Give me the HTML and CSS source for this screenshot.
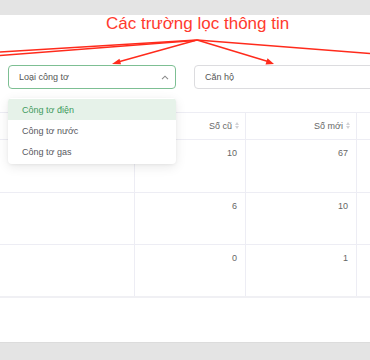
FILE: index.html
```html
<!DOCTYPE html>
<html lang="vi">
<head>
<meta charset="utf-8">
<link rel="stylesheet" href="styles.css">
</head>
<body>
<div class="topbar"></div>
<div class="main">
  <div class="title">Các trường lọc thông tin</div>
  <div class="filters">
    <div class="select active">
      <span>Loại công tơ</span>
      <svg class="chev" width="8" height="5" viewBox="0 0 8 5"><polyline points="1,4.2 4,1.2 7,4.2" fill="none" stroke="#8a8a8a" stroke-width="1.1"/></svg>
    </div>
    <div class="select wide"><span>Căn hộ</span></div>
  </div>
  <div class="table">
    <div class="row head">
      <div class="cell"></div>
      <div class="cell">Số cũ <i class="sort"><b class="up"></b><b class="down"></b></i></div>
      <div class="cell">Số mới <i class="sort"><b class="up"></b><b class="down"></b></i></div>
      <div class="cell"></div>
    </div>
    <div class="row">
      <div class="cell"></div><div class="cell">10</div><div class="cell">67</div><div class="cell"></div>
    </div>
    <div class="row r2">
      <div class="cell"></div><div class="cell">6</div><div class="cell">10</div><div class="cell"></div>
    </div>
    <div class="row last">
      <div class="cell"></div><div class="cell">0</div><div class="cell">1</div><div class="cell"></div>
    </div>
  </div>
  <ul class="dropdown">
    <li class="on">Công tơ điện</li>
    <li>Công tơ nước</li>
    <li>Công tơ gas</li>
  </ul>
  <svg class="arrows" width="370" height="80" viewBox="0 0 370 80">
    <g stroke="#ff2b1c" stroke-width="1.4" fill="none">
      <line x1="197" y1="40" x2="0" y2="52"/>
      <line x1="195" y1="40.5" x2="0" y2="55.5"/>
      <line x1="197" y1="40" x2="118" y2="62"/>
      <line x1="197" y1="40" x2="268" y2="61.5"/>
      <line x1="197" y1="40" x2="370" y2="53.5"/>
    </g>
    <g fill="#ff2b1c">
      <polygon points="112,64 119.5,58.8 121,64.2"/>
      <polygon points="274,64 265.5,64.5 267.5,58.3"/>
    </g>
  </svg>
</div>
<div class="bottombar"></div>
</body>
</html>
```
FILE: styles.css
```css
html, body {
  margin: 0;
  padding: 0;
}
body {
  width: 370px;
  height: 360px;
  overflow: hidden;
  background: #fff;
  font-family: "Liberation Sans", Arial, sans-serif;
}
.topbar {
  height: 15px;
  background: #e4e4e4;
}
.bottombar {
  height: 17px;
  background: #e4e4e4;
  border-top: 1px solid #dcdcdc;
}
.main {
  position: relative;
  height: 327px;
  background: #fff;
  overflow: hidden;
}
.title {
  font-size: 17px;
  line-height: 17px;
  color: #ff3a2e;
  padding-left: 106px;
  white-space: nowrap;
}
.filters {
  display: flex;
  gap: 18px;
  padding: 33px 0 0 8px;
  width: 600px;
}
.select {
  box-sizing: border-box;
  width: 168px;
  height: 24px;
  border: 1px solid #dcdcdf;
  border-radius: 4px;
  display: flex;
  align-items: center;
  justify-content: space-between;
  padding: 0 6px 0 10px;
  font-size: 9px;
  color: #555;
}
.select.wide {
  width: 240px;
}
.select.active {
  border-color: #7dbf93;
}
.chev {
  display: block;
}
.table {
  margin-top: 23px;
  width: 480px;
  border-top: 1px solid #ededf4;
}
.row {
  display: grid;
  grid-template-columns: 135px 111px 111px 111px;
  height: 53px;
  border-bottom: 1px solid #ededf4;
  box-sizing: border-box;
}
.row.head {
  height: 27px;
}
.row.r2 {
  height: 52px;
}
.row.last {
  border-bottom: 2px solid #f0f0f4;
}
.cell {
  border-right: 1px solid #ededf4;
  font-size: 9px;
  color: #666;
  text-align: right;
  padding: 8px 8px 0 0;
  line-height: 10px;
}
.head .cell {
  padding: 8px 6px 0 0;
  display: flex;
  justify-content: flex-end;
  align-items: flex-start;
  gap: 3px;
  color: #666;
}
.sort {
  display: flex;
  flex-direction: column;
  gap: 1px;
  padding-top: 1px;
}
.sort b {
  width: 0;
  height: 0;
  border-left: 2.5px solid transparent;
  border-right: 2.5px solid transparent;
}
.sort .up {
  border-bottom: 3px solid #d2d2d6;
}
.sort .down {
  border-top: 3px solid #d2d2d6;
}
.dropdown {
  position: absolute;
  left: 8px;
  top: 83px;
  width: 168px;
  margin: 0;
  padding: 1px 0 2px 0;
  list-style: none;
  background: #fff;
  border-radius: 4px;
  box-shadow: 0 3px 12px rgba(0, 0, 0, 0.09), 0 1px 3px rgba(0, 0, 0, 0.05);
  overflow: hidden;
}
.dropdown li {
  height: 21px;
  line-height: 22px;
  padding-left: 14px;
  font-size: 9px;
  color: #58585e;
}
.dropdown li.on {
  background: #e6f2e9;
  color: #3f9a5d;
}
.arrows {
  position: absolute;
  left: 0;
  top: -15px;
}
```
